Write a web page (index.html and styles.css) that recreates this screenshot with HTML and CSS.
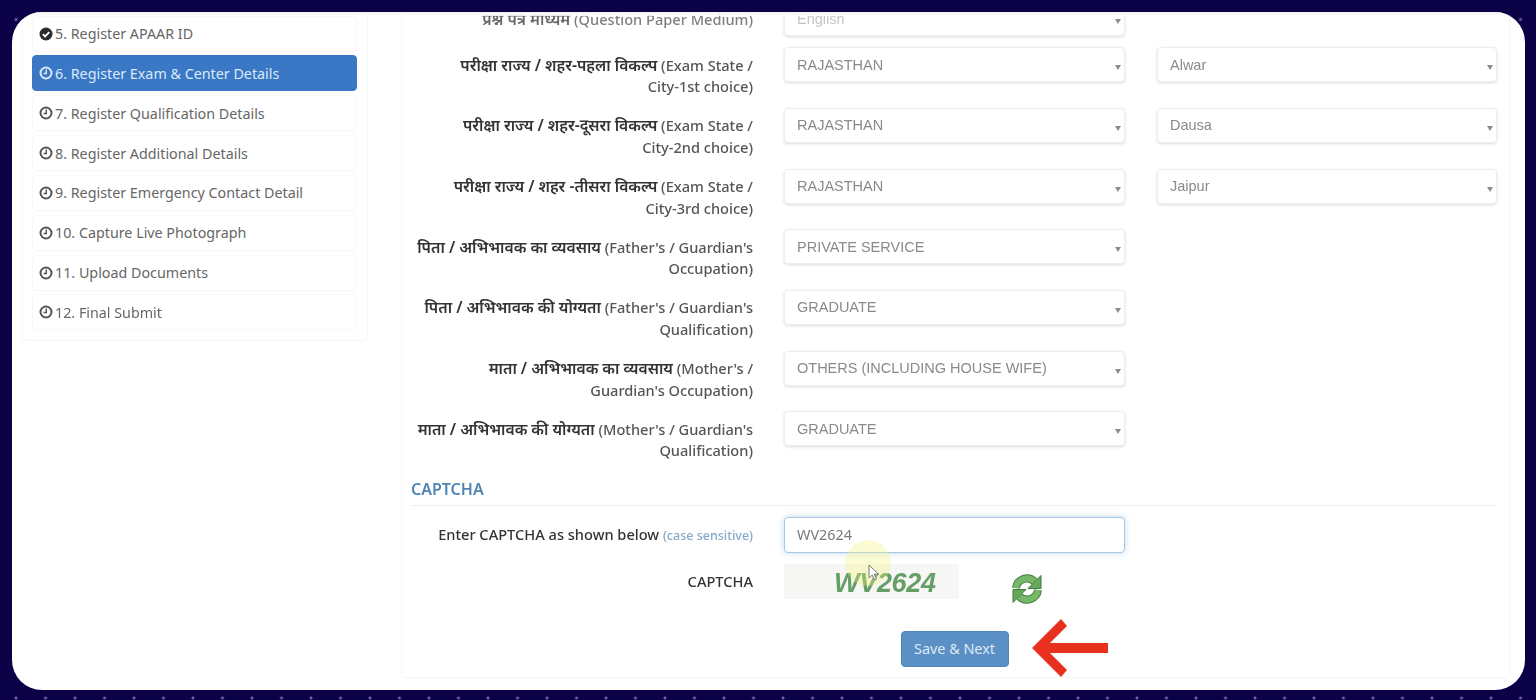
FILE: index.html
```html
<!DOCTYPE html>
<html lang="hi">
<head>
<meta charset="utf-8">
<title>Register Exam &amp; Center Details</title>
<link rel="stylesheet" href="styles.css">
</head>
<body>
<svg class="defs" width="0" height="0" aria-hidden="true">
  <symbol id="i-check" viewBox="0 0 14 14"><circle cx="7" cy="7" r="6.5" fill="currentColor"/><path d="M3.8 7.1l2.3 2.3 4.2-4.2" fill="none" stroke="#fff" stroke-width="1.9"/></symbol>
  <symbol id="i-clock" viewBox="0 0 14 14"><circle cx="7" cy="7" r="5.500" fill="none" stroke="currentColor" stroke-width="2"/><path d="M7.300 3.600v3.900H4.600" fill="none" stroke="currentColor" stroke-width="1.400"/></symbol>
</svg>
<main class="card">
  <aside class="side">
    <a class="step"><svg class="ic ic-done"><use href="#i-check"/></svg>5. Register APAAR ID</a>
    <a class="step active"><svg class="ic"><use href="#i-clock"/></svg>6. Register Exam &amp; Center Details</a>
    <a class="step"><svg class="ic"><use href="#i-clock"/></svg>7. Register Qualification Details</a>
    <a class="step"><svg class="ic"><use href="#i-clock"/></svg>8. Register Additional Details</a>
    <a class="step"><svg class="ic"><use href="#i-clock"/></svg>9. Register Emergency Contact Detail</a>
    <a class="step"><svg class="ic"><use href="#i-clock"/></svg>10. Capture Live Photograph</a>
    <a class="step"><svg class="ic"><use href="#i-clock"/></svg>11. Upload Documents</a>
    <a class="step"><svg class="ic"><use href="#i-clock"/></svg>12. Final Submit</a>
  </aside>
  <section class="form">
    <div class="row">
      <label class="lbl lbl-top"><span class="hi">प्रश्न पत्र माध्यम</span> (Question Paper Medium)</label>
      <div class="sel"><select class="faded"><option>English</option></select></div>
    </div>
    <div class="row">
      <label class="lbl"><span class="hi">परीक्षा राज्य / शहर-पहला विकल्प</span> (Exam State /<br>City-1st choice)</label>
      <div class="sel"><select><option>RAJASTHAN</option></select></div>
      <div class="sel"><select><option>Alwar</option></select></div>
    </div>
    <div class="row">
      <label class="lbl"><span class="hi">परीक्षा राज्य / शहर-दूसरा विकल्प</span> (Exam State /<br>City-2nd choice)</label>
      <div class="sel"><select><option>RAJASTHAN</option></select></div>
      <div class="sel"><select><option>Dausa</option></select></div>
    </div>
    <div class="row">
      <label class="lbl"><span class="hi">परीक्षा राज्य / शहर -तीसरा विकल्प</span> (Exam State /<br>City-3rd choice)</label>
      <div class="sel"><select><option>RAJASTHAN</option></select></div>
      <div class="sel"><select><option>Jaipur</option></select></div>
    </div>
    <div class="row">
      <label class="lbl"><span class="hi">पिता / अभिभावक का व्यवसाय</span> (Father's / Guardian's<br>Occupation)</label>
      <div class="sel"><select><option>PRIVATE SERVICE</option></select></div>
    </div>
    <div class="row">
      <label class="lbl"><span class="hi">पिता / अभिभावक की योग्यता</span> (Father's / Guardian's<br>Qualification)</label>
      <div class="sel"><select><option>GRADUATE</option></select></div>
    </div>
    <div class="row">
      <label class="lbl"><span class="hi">माता / अभिभावक का व्यवसाय</span> (Mother's /<br>Guardian's Occupation)</label>
      <div class="sel"><select><option>OTHERS (INCLUDING HOUSE WIFE)</option></select></div>
    </div>
    <div class="row">
      <label class="lbl"><span class="hi">माता / अभिभावक की योग्यता</span> (Mother's / Guardian's<br>Qualification)</label>
      <div class="sel"><select><option>GRADUATE</option></select></div>
    </div>
    <h2 class="sec">CAPTCHA</h2>
    <div class="row row-cap">
      <label class="lbl lbl-cap">Enter CAPTCHA as shown below <small>(case sensitive)</small></label>
      <input class="cap-input" type="text" value="WV2624">
    </div>
    <div class="row row-img">
      <label class="lbl lbl-cap">CAPTCHA</label>
      <div class="cap-wrap">
        <div class="cap-img">WV2624</div>
        <svg class="refresh" viewBox="0 0 34 34" width="34" height="34" aria-hidden="true">
          <g id="half">
            <path d="M6 16A11 11 0 0 1 24.500 9.500" fill="none" stroke="#3f7d3b" stroke-width="8"/>
            <path d="M6 16A11 11 0 0 1 24.500 9.500" fill="none" stroke="#76b768" stroke-width="6"/>
            <path d="M31 3.500V16.500H18Z" fill="#66a85a" stroke="#3f7d3b" stroke-width="1"/>
          </g>
          <use href="#half" transform="rotate(180 17 17)"/>
        </svg>
      </div>
    </div>
    <div class="row-btn">
      <button class="save" type="button">Save &amp; Next</button>
    </div>
  </section>
  <div class="spot"></div>
  <svg class="cursor" viewBox="0 0 12 18" width="12" height="18" aria-hidden="true"><path d="M1 1v13l3.200-3 2.300 5 2-1-2.300-4.800H10.500Z" fill="#fff" stroke="#777" stroke-width="1"/></svg>
  <svg class="arrow" viewBox="0 0 78 58" width="78" height="58" aria-hidden="true"><path d="M77 24H19L36 7 30 0 1 29l29 29 6-7-17-17h58Z" fill="#e8301f"/></svg>
</main>
</body>
</html>
```
FILE: styles.css
```css
* { box-sizing: border-box; }
body {
  margin: 0;
  height: 700px;
  overflow: hidden;
  background-color: #0b0146;
  background-image: radial-gradient(circle, #6d5fa8 0 1.2px, transparent 1.8px);
  background-size: 29.5px 29.5px;
  background-position: 1.25px 4.75px;
  font-family: "Noto Sans", "Open Sans", sans-serif;
}
.defs { position: absolute; }
.card {
  position: relative;
  margin: 12px 0 0 12px;
  width: 1513px;
  height: 678px;
  background: #fff;
  border-radius: 30px;
  overflow: hidden;
  display: flex;
  gap: 33px;
  padding: 0 15px 12px 10px;
  filter: blur(.45px);
}
.card::after {
  content: "";
  position: absolute;
  left: 0;
  right: 0;
  top: 0;
  height: 4px;
  background: linear-gradient(#f1f1f1, rgba(255, 255, 255, .85));
}
.side {
  width: 346px;
  align-self: flex-start;
  margin-top: -12.5px;
  padding: 15px 10px 10px 9px;
  border: 1px solid #f6f6f6;
  border-radius: 4px;
  display: flex;
  flex-direction: column;
  gap: 3.85px;
}
.step {
  height: 36px;
  padding-left: 6px;
  display: flex;
  align-items: center;
  gap: 2px;
  border: 1px solid #f7f7f7;
  border-radius: 4px;
  font-size: 14.3px;
  color: #666;
}
.step.active { background: #3a78c6; border-color: #3a78c6; color: #dbe8f6; }
.ic { width: 14px; height: 14px; flex: none; color: #555; }
.ic-done { color: #2b2b2b; }
.active .ic { color: #dbe8f6; }
.form {
  flex: 1;
  margin-top: -12px;
  padding: 0 13px 0 9px;
  border: 1px solid #f6f6f6;
  border-radius: 4px;
  display: flex;
  flex-direction: column;
  min-width: 0;
}
.row {
  display: grid;
  grid-template-columns: 341px 341px 340px;
  column-gap: 32px;
  margin-bottom: 10.2px;
}
.lbl {
  margin-right: -1px;
  padding-top: 7.5px;
  text-align: right;
  font-size: 14.6px;
  line-height: 21.5px;
  font-weight: 500;
  color: #555;
}
.hi { font-size: 15.7px; line-height: 1; font-weight: 600; color: #333; }
.lbl-top { opacity: .75; }
.lbl-cap { padding-top: 7px; color: #333; }
.lbl-cap small { font-size: 12.5px; font-weight: 500; color: #86a9c9; }
.sel { position: relative; height: 36px; }
.sel::after {
  content: "";
  position: absolute;
  right: 4px;
  top: 18px;
  border-left: 3px solid transparent;
  border-right: 3px solid transparent;
  border-top: 5px solid #8c8c8c;
}
select {
  appearance: none;
  width: 100%;
  height: 35px;
  padding: 0 12px;
  background: #fff;
  border: 1px solid #eeeeee;
  border-radius: 4px;
  box-shadow: 0 1px 3px rgba(0, 0, 0, .14);
  font-family: "Liberation Sans", Arial, sans-serif;
  font-size: 14.5px;
  color: #8a8a8a;
}
select.faded { color: #c4c4c4; }
.sec {
  margin: 2.9px 0 11px;
  height: 31px;
  line-height: 28px;
  font-size: 16px;
  font-weight: 600;
  color: #4f86b3;
  border-bottom: 1px solid #eeeeee;
}
.cap-input {
  width: 341px;
  height: 36px;
  padding: 0 12px;
  border: 1px solid #a9c8e4;
  border-radius: 4px;
  box-shadow: 0 0 6px rgba(120, 170, 220, .45);
  font-family: "Noto Sans", sans-serif;
  font-size: 14.4px;
  color: #7a7a7a;
  outline: none;
}
.row-cap { margin-bottom: 11px; }
.row-img { margin-bottom: 32px; }
.cap-wrap { display: flex; align-items: flex-start; height: 35px; }
.cap-img {
  width: 175px;
  height: 35px;
  padding-left: 50px;
  background: #f6f6f4;
  font-family: "Liberation Sans", Arial, sans-serif;
  font-size: 27px;
  line-height: 38px;
  font-weight: 700;
  font-style: italic;
  letter-spacing: -.3px;
  color: #659e66;
}
.refresh { margin: 8px 0 0 51px; flex: none; }
.row-btn { display: flex; padding-left: 489.5px; }
.save {
  width: 108px;
  height: 36px;
  background: #5a90c6;
  border: 1px solid #4f86bb;
  border-radius: 4px;
  font-family: "Noto Sans", sans-serif;
  font-size: 14.4px;
  color: #dfeaf5;
}
.spot {
  position: absolute;
  left: 833px;
  top: 528px;
  width: 46px;
  height: 46px;
  border-radius: 50%;
  background: rgba(245, 245, 120, .32);
}
.cursor { position: absolute; left: 856px; top: 552px; }
.arrow { position: absolute; left: 1019px; top: 607px; }
```
